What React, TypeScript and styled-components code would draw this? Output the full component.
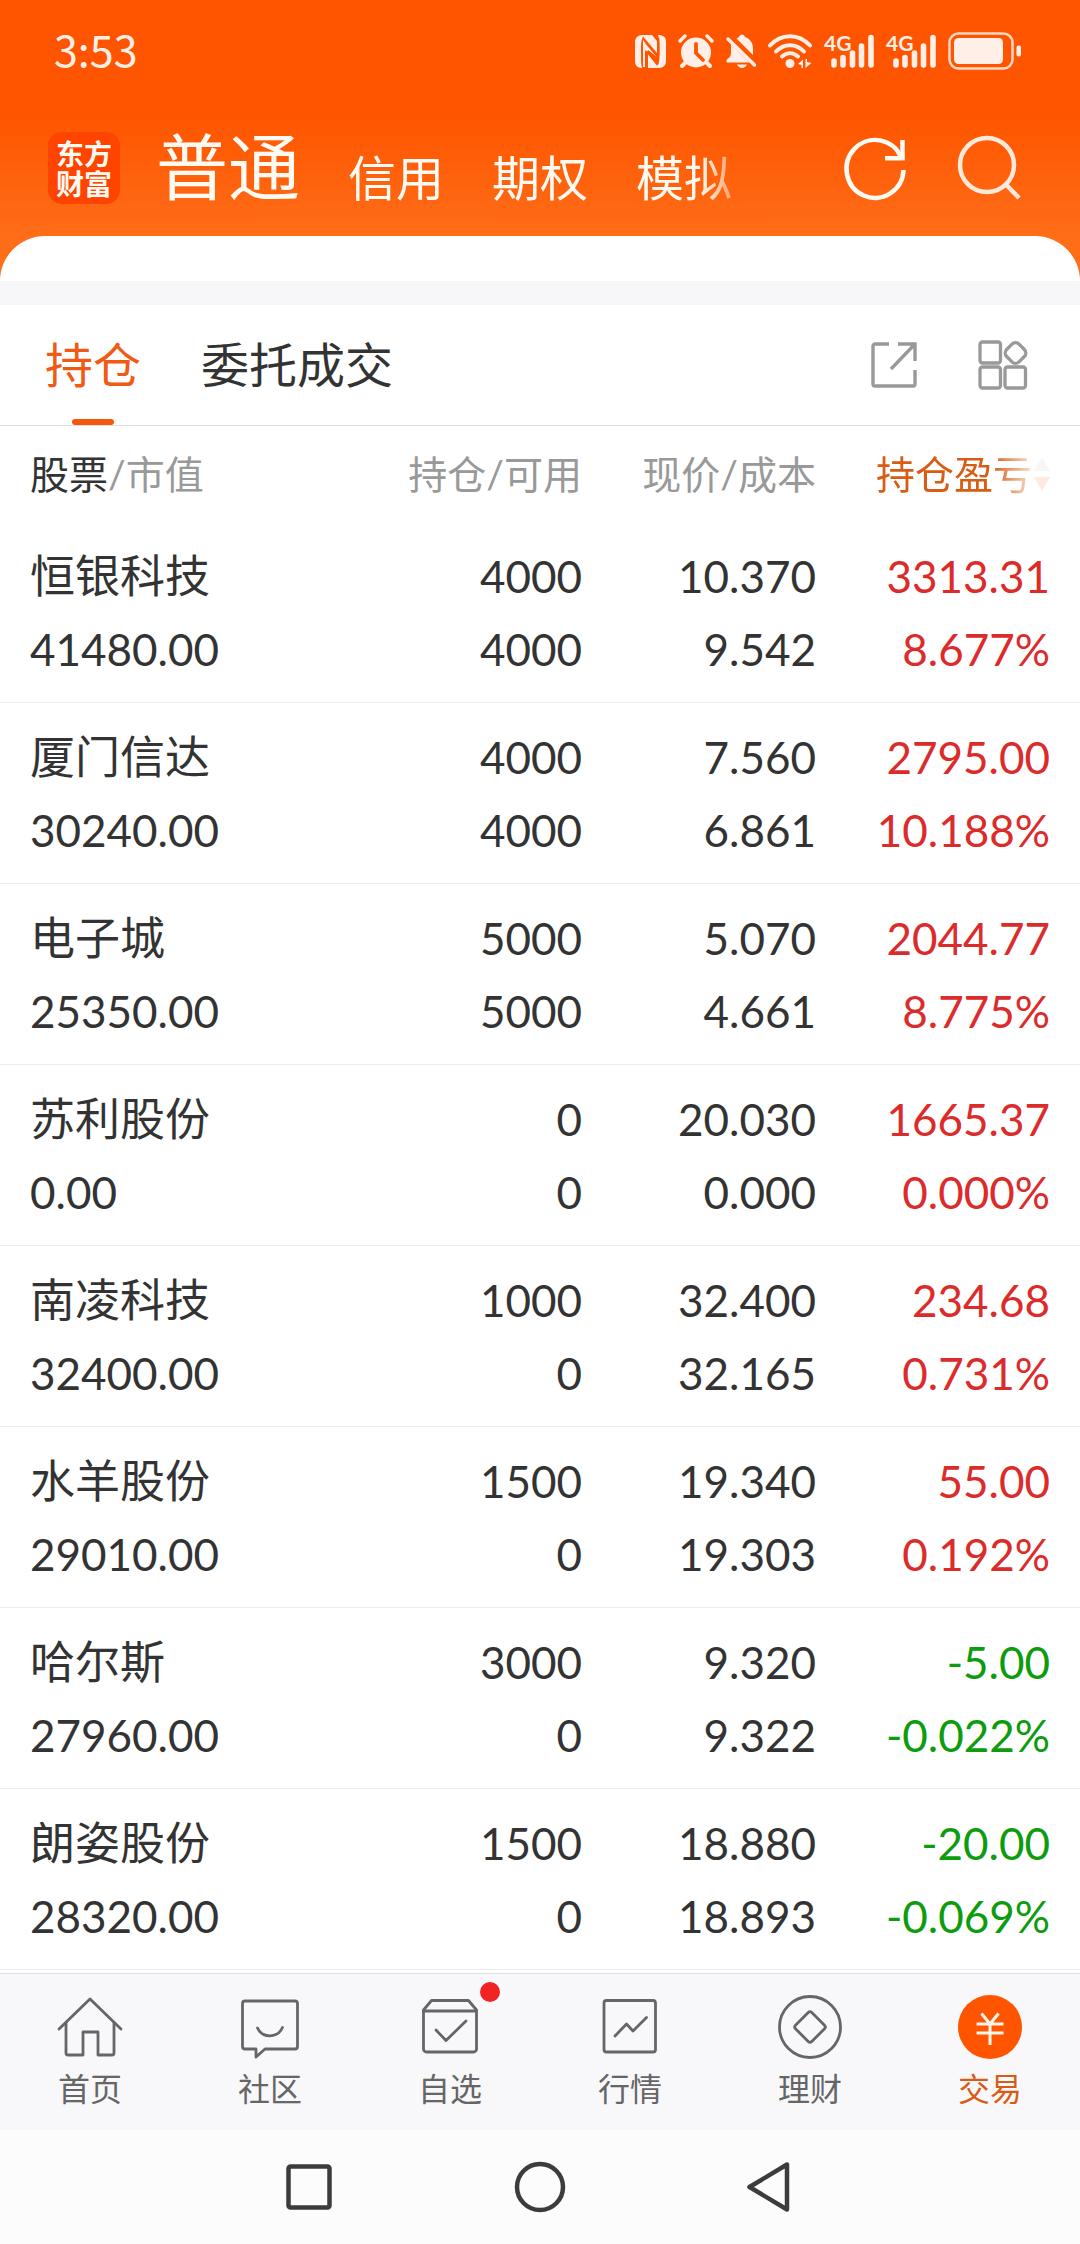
import React from 'react';
import styled, { createGlobalStyle } from 'styled-components';

const GlobalStyle = createGlobalStyle`
  *, *::before, *::after { box-sizing: border-box; }
  body {
    margin: 0;
    background: #fff;
    color: #333;
    font-family: Lato, 'Noto Sans CJK SC', sans-serif;
  }
  button {
    display: block;
    margin: 0;
    padding: 0;
    border: 0;
    background: none;
    color: inherit;
    font: inherit;
    cursor: pointer;
  }
  a { color: inherit; text-decoration: none; }
  svg { display: block; flex: none; overflow: visible; }
`;

const Page = styled.div`
  display: flex;
  flex-direction: column;
  min-height: 100vh;
`;

const Hero = styled.header`
  background: linear-gradient(#ff5500 0, #ff5500 115px, #ff6d18 236px);
`;

const StatusBar = styled.div`
  display: flex;
  align-items: center;
  justify-content: space-between;
  height: 102px;
  padding: 0 59px 0 54px;
  color: #ffefe6;
`;

const Clock = styled.time`
  padding-bottom: 6px;
  font-family: 'Noto Sans CJK SC', sans-serif;
  font-size: 43px;
  line-height: 64px;
`;

const StatusIcons = styled.div`
  display: flex;
  align-items: center;
  gap: 12px;
`;

const TopBar = styled.div`
  display: flex;
  align-items: flex-end;
  height: 134px;
  padding: 0 60px 20px 48px;
  color: #fffaf2;
`;

const Logo = styled.a`
  flex: none;
  width: 72px;
  height: 72px;
  margin: 0 36px 12px 0;
  padding: 6px 8px;
  border-radius: 14px;
  background: #ff4400;
  font-family: 'Noto Sans CJK SC', sans-serif;
  font-weight: 700;
  font-size: 28px;
  line-height: 30px;
`;

const Accounts = styled.nav`
  display: flex;
  flex: 1;
  align-items: flex-end;
  gap: 48px;
  min-width: 0;
  white-space: nowrap;
  font-family: 'Noto Sans CJK SC', sans-serif;
  mask-image: linear-gradient(to left, transparent, #000 56px);
`;

const Account = styled.button<{ $active?: boolean }>`
  flex: none;
  font-size: ${(p) => (p.$active ? 72 : 48)}px;
  line-height: ${(p) => (p.$active ? 106 : 82)}px;
`;

const TopActions = styled.div`
  display: flex;
  gap: 48px;
  margin: 0 0 16px 88px;
`;

const CardTop = styled.div`
  height: 45px;
  border-radius: 46px 46px 0 0;
  background: #fff;
`;

const Band = styled.div`
  height: 24px;
  background: #f7f7fa;
`;

const Main = styled.main`
  flex: 1;
`;

const Sections = styled.div`
  display: flex;
  align-items: center;
  justify-content: space-between;
  height: 121px;
  padding: 0 52px 0 45px;
  border-bottom: 1px solid #dedede;
`;

const SectionTabs = styled.div`
  display: flex;
  gap: 60px;
  height: 100%;
`;

const SectionTab = styled.button<{ $active?: boolean }>`
  position: relative;
  color: ${(p) => (p.$active ? '#f05a14' : '#333')};
  font-size: 48px;
  line-height: 72px;

  &::after {
    content: '';
    display: ${(p) => (p.$active ? 'block' : 'none')};
    position: absolute;
    bottom: 0;
    left: calc(50% - 21px);
    width: 42px;
    height: 6px;
    border-radius: 3px;
    background: #f4570d;
  }
`;

const SectionActions = styled.div`
  display: flex;
  align-items: center;
  gap: 60px;
  color: #999;
`;

const Holdings = styled.table`
  width: 100%;
  border-collapse: separate;
  border-spacing: 0;
  table-layout: fixed;
`;

const Col = styled.col<{ $width?: number }>`
  width: ${(p) => (p.$width ? `${p.$width}px` : 'auto')};
`;

const HeadCell = styled.th<{ $left?: boolean }>`
  height: 96px;
  padding: 0 0 0 ${(p) => (p.$left ? 30 : 0)}px;
  color: #999;
  font-size: 39px;
  font-weight: 400;
  line-height: 60px;
  text-align: ${(p) => (p.$left ? 'left' : 'right')};
  white-space: nowrap;

  &:last-child { padding-right: 30px; }
`;

const Strong = styled.span`
  color: #333;
`;

const SortButton = styled.button`
  display: flex;
  align-items: center;
  gap: 2px;
  margin-left: auto;
  color: #d95c14;
`;

const SortLabel = styled.span`
  mask-image: linear-gradient(to right, #000 74%, rgba(0, 0, 0, 0.2));
`;

const Cell = styled.td<{ $tone?: string }>`
  height: 181px;
  padding: 18px 0 16px;
  border-bottom: 1px solid #ececec;
  color: ${(p) => p.$tone || '#333'};
  font-size: 44px;
  line-height: 73px;
  text-align: right;
  white-space: nowrap;

  &:first-child { padding-left: 30px; text-align: left; }
  &:last-child { padding-right: 30px; }
`;

const Line = styled.div``;

const StockName = styled.div`
  font-size: 45px;
`;

const TabBar = styled.nav`
  display: grid;
  grid-template-columns: repeat(6, 1fr);
  border-top: 1px solid #e0e0e3;
  background: #f8f8fb;
`;

const Tab = styled.a<{ $active?: boolean }>`
  position: relative;
  display: flex;
  flex-direction: column;
  align-items: center;
  gap: 8px;
  padding: 19px 0 21px;
  color: ${(p) => (p.$active ? '#d95c14' : '#666')};
  font-size: 32px;
  line-height: 40px;
`;

const Dot = styled.span`
  position: absolute;
  top: 8px;
  left: calc(50% + 30px);
  width: 20px;
  height: 20px;
  border-radius: 50%;
  background: #f02424;
`;

const SystemBar = styled.div`
  background: #fcfcfc;
  color: #3c3c3c;
`;

const SystemKeys = styled.div`
  display: grid;
  grid-template-columns: repeat(3, 1fr);
  max-width: 690px;
  height: 114px;
  margin: 0 auto;
`;

const SystemKey = styled.button`
  display: flex;
  align-items: center;
  justify-content: center;
`;

/* Status bar icons */

const Nfc = () => (
  <svg width="31" height="33" viewBox="0 0 31 33">
    <path
      d="M7 0h10l5 6v12L8 1.500C6.500 5 6 8 6 12v12c0 4 .5 7 1 9C2 33 0 30 0 26V7C0 3 3 0 7 0z"
      fill="currentColor"
    />
    <path
      d="M8 5l14 17-9-7v18h11c4.500 0 7-3 7-7V7c0-5-2.500-7-8-7 1 3 1.500 7 1.500 12v9c0 4-.5 7-1.500 9L10 15v17H8z"
      fill="currentColor"
    />
    <path d="M11 8l12 14M11.500 16l11 14M23.500 3v17" stroke="#ff5500" strokeWidth="1.800" fill="none" />
  </svg>
);

const Alarm = () => (
  <svg width="36" height="34" viewBox="0 0 36 34" fill="none" stroke="currentColor" strokeLinecap="round">
    <circle cx="18" cy="18.500" r="15" fill="currentColor" stroke="none" />
    <path d="M2 7l5-5M34 7l-5-5" strokeWidth="3.500" />
    <path d="M8 28l-4 4M28 28l4 4" strokeWidth="4" />
    <path d="M18 10v9l7 7" stroke="#ff5500" strokeWidth="3.800" />
  </svg>
);

const Muted = () => (
  <svg width="30" height="34" viewBox="0 0 30 34" fill="currentColor">
    <path d="M10.500 4.500L13 3c1-3.500 5-3.500 6 0 5 2 8 6 8 11v7z" />
    <path d="M5 10l18.500 18.500H2c-2 0-2-2-.5-3.500C4.500 23 5 21 5 18z" />
    <path d="M11 30.500h10c-2 4.500-8 4.500-10 0z" />
    <path d="M2 5l26.500 26" fill="none" stroke="currentColor" strokeWidth="3.500" strokeLinecap="round" />
  </svg>
);

const Wifi = () => (
  <svg width="44" height="34" viewBox="0 0 44 34" fill="none" stroke="currentColor" strokeWidth="4" strokeLinecap="round">
    <path d="M2 11.500C13-1 31-1 42 11.500" />
    <path d="M8 17.500C16 9 28 9 36 17.500" />
    <path d="M14 22.500C19 18 25 18 30 22.500" />
    <circle cx="22" cy="29.500" r="4.500" fill="currentColor" stroke="none" />
    <path d="M30 30l5-4.500V34h-1.500v-3zM43.500 29l-6 5v-9h1.500v3z" fill="currentColor" stroke="none" />
  </svg>
);

const Signal = () => (
  <svg width="50" height="34" viewBox="0 0 50 34">
    <text x="0" y="17" fill="currentColor" fontFamily="Lato, sans-serif" fontWeight="700" fontSize="21">4G</text>
    <path
      d="M10 27v4M19 23.500v7.500M28.500 19v12M37.500 12v19M47 3.500v27.500"
      stroke="currentColor"
      strokeWidth="5.600"
      strokeLinecap="round"
    />
  </svg>
);

const Battery = () => (
  <svg width="73" height="38" viewBox="0 0 73 38">
    <rect x="1.500" y="1.500" width="63" height="35" rx="9" fill="none" stroke="currentColor" strokeWidth="2.500" opacity=".85" />
    <rect x="6" y="6" width="49" height="26" rx="4.500" fill="currentColor" />
    <rect x="68.500" y="13.500" width="4.500" height="11" rx="2" fill="currentColor" />
  </svg>
);

/* Toolbar icons */

const Refresh = () => (
  <svg width="64" height="64" viewBox="0 0 64 64" fill="none" stroke="currentColor" strokeWidth="4.500">
    <path d="M59.500 34A28.500 29 0 1 1 57 21" />
    <path d="M58.500 4v18.200H41" />
  </svg>
);

const Search = () => (
  <svg width="64" height="64" viewBox="0 0 64 64" fill="none" stroke="#ffe9db" strokeWidth="4.500">
    <circle cx="31" cy="29" r="27" />
    <path d="M49 47.500L63 62" />
  </svg>
);

const Share = () => (
  <svg width="48" height="48" viewBox="0 0 48 48" fill="none" stroke="currentColor" strokeWidth="3.400">
    <path d="M19 3H5a2 2 0 0 0-2 2v38a2 2 0 0 0 2 2h38a2 2 0 0 0 2-2V29" />
    <path d="M28 3h17v17M44.500 3.500L21 28" />
  </svg>
);

const Apps = () => (
  <svg width="50" height="50" viewBox="0 0 50 50" fill="none" stroke="currentColor" strokeWidth="3.300">
    <rect x="2" y="2" width="20.500" height="21" rx="2.500" />
    <rect x="2" y="27" width="20.500" height="21" rx="2.500" />
    <rect x="27" y="27" width="20.500" height="21" rx="2.500" />
    <rect x="28.750" y="4.250" width="17.500" height="17.500" rx="5" transform="rotate(45 37.500 13)" />
  </svg>
);

const SortArrows = () => (
  <svg width="16" height="36" viewBox="0 0 16 36">
    <path d="M8 1l8 14H0z" fill="#f6f6f7" />
    <path d="M8 35l8-14H0z" fill="#fdeae1" />
  </svg>
);

/* Bottom tab icons */

const iconProps = {
  width: 68,
  height: 68,
  viewBox: '0 0 68 68',
  fill: 'none',
  stroke: 'currentColor',
  strokeWidth: 2.8,
  strokeLinecap: 'round' as const,
  strokeLinejoin: 'round' as const,
};

const Home = () => (
  <svg {...iconProps}>
    <path d="M3 36L34 6l31 30" />
    <path d="M10 30v30a2 2 0 0 0 2 2h15V39h15v23h14a2 2 0 0 0 2-2V30" />
  </svg>
);

const Community = () => (
  <svg {...iconProps}>
    <path d="M9 8h50a2.500 2.500 0 0 1 2.500 2.500v43A2.500 2.500 0 0 1 59 56H29l-9 8v-8H9a2.500 2.500 0 0 1-2.500-2.500v-43A2.500 2.500 0 0 1 9 8z" />
    <path d="M21.500 35c5 10.500 20 10.500 25-.5" />
  </svg>
);

const Watchlist = () => (
  <svg {...iconProps}>
    <path d="M7.500 17l8-9.500h37l8 9.500v39a3 3 0 0 1-3 3h-47a3 3 0 0 1-3-3z" />
    <path d="M7.500 18h53M20 37l10 10.500L50 28" />
  </svg>
);

const Market = () => (
  <svg {...iconProps}>
    <rect x="8" y="7.500" width="51.500" height="51.500" rx="2.500" />
    <path d="M19 43l11.500-12 6.500 7 13.500-13.500" />
  </svg>
);

const Wealth = () => (
  <svg {...iconProps}>
    <circle cx="34" cy="34" r="30.500" />
    <rect x="22.500" y="22.500" width="23" height="23" rx="2.500" transform="rotate(45 34 34)" />
  </svg>
);

const Trade = () => (
  <svg {...iconProps} stroke="#fff6ec" strokeWidth={3} strokeLinecap="butt">
    <circle cx="34" cy="34" r="32" fill="#ff5500" stroke="none" />
    <path d="M25.500 20.500L34 31l8.500-10.500M34 31v21M20.500 31h27M20.500 40h27" />
  </svg>
);

/* System keys */

const Recents = () => (
  <svg width="52" height="52" viewBox="0 0 52 52" fill="none" stroke="currentColor" strokeWidth="4.500">
    <rect x="4.500" y="5.500" width="41" height="41" rx="2" />
  </svg>
);

const HomeKey = () => (
  <svg width="52" height="52" viewBox="0 0 52 52" fill="none" stroke="currentColor" strokeWidth="4.500">
    <circle cx="26" cy="26" r="23" />
  </svg>
);

const Back = () => (
  <svg width="52" height="52" viewBox="0 0 52 52" fill="none" stroke="currentColor" strokeWidth="4.500" strokeLinejoin="round">
    <path d="M5.500 26L43 3.500v45z" />
  </svg>
);

type Holding = {
  name: string;
  value: string;
  held: string;
  usable: string;
  price: string;
  cost: string;
  profit: string;
  rate: string;
};

const toHolding = ([name, value, held, usable, price, cost, profit, rate]: string[]): Holding => ({
  name, value, held, usable, price, cost, profit, rate,
});

const holdings: Holding[] = [
  ['恒银科技', '41480.00', '4000', '4000', '10.370', '9.542', '3313.31', '8.677%'],
  ['厦门信达', '30240.00', '4000', '4000', '7.560', '6.861', '2795.00', '10.188%'],
  ['电子城', '25350.00', '5000', '5000', '5.070', '4.661', '2044.77', '8.775%'],
  ['苏利股份', '0.00', '0', '0', '20.030', '0.000', '1665.37', '0.000%'],
  ['南凌科技', '32400.00', '1000', '0', '32.400', '32.165', '234.68', '0.731%'],
  ['水羊股份', '29010.00', '1500', '0', '19.340', '19.303', '55.00', '0.192%'],
  ['哈尔斯', '27960.00', '3000', '0', '9.320', '9.322', '-5.00', '-0.022%'],
  ['朗姿股份', '28320.00', '1500', '0', '18.880', '18.893', '-20.00', '-0.069%'],
].map(toHolding);

const tabs = [
  { label: '首页', Icon: Home },
  { label: '社区', Icon: Community },
  { label: '自选', Icon: Watchlist, dot: true },
  { label: '行情', Icon: Market },
  { label: '理财', Icon: Wealth },
  { label: '交易', Icon: Trade, active: true },
];

const toneOf = (profit: string) => (profit.startsWith('-') ? '#0d9c0d' : '#dc2b2b');

export default function App() {
  return (
    <Page>
      <GlobalStyle />
      <Hero>
        <StatusBar>
          <Clock>3:53</Clock>
          <StatusIcons>
            <Nfc />
            <Alarm />
            <Muted />
            <Wifi />
            <Signal />
            <Signal />
            <Battery />
          </StatusIcons>
        </StatusBar>
        <TopBar>
          <Logo href="#">东方财富</Logo>
          <Accounts>
            <Account $active>普通</Account>
            <Account>信用</Account>
            <Account>期权</Account>
            <Account>模拟</Account>
          </Accounts>
          <TopActions>
            <button type="button" aria-label="刷新"><Refresh /></button>
            <button type="button" aria-label="搜索"><Search /></button>
          </TopActions>
        </TopBar>
        <CardTop />
      </Hero>
      <Band />
      <Main>
        <Sections>
          <SectionTabs>
            <SectionTab $active>持仓</SectionTab>
            <SectionTab>委托成交</SectionTab>
          </SectionTabs>
          <SectionActions>
            <button type="button" aria-label="分享"><Share /></button>
            <button type="button" aria-label="更多"><Apps /></button>
          </SectionActions>
        </Sections>
        <Holdings>
          <colgroup>
            <Col />
            <Col $width={234} />
            <Col $width={234} />
            <Col $width={264} />
          </colgroup>
          <thead>
            <tr>
              <HeadCell $left><Strong>股票</Strong>/市值</HeadCell>
              <HeadCell>持仓/可用</HeadCell>
              <HeadCell>现价/成本</HeadCell>
              <HeadCell>
                <SortButton type="button">
                  <SortLabel>持仓盈亏</SortLabel>
                  <SortArrows />
                </SortButton>
              </HeadCell>
            </tr>
          </thead>
          <tbody>
            {holdings.map((h) => (
              <tr key={h.name}>
                <Cell><StockName>{h.name}</StockName><Line>{h.value}</Line></Cell>
                <Cell><Line>{h.held}</Line><Line>{h.usable}</Line></Cell>
                <Cell><Line>{h.price}</Line><Line>{h.cost}</Line></Cell>
                <Cell $tone={toneOf(h.profit)}><Line>{h.profit}</Line><Line>{h.rate}</Line></Cell>
              </tr>
            ))}
          </tbody>
        </Holdings>
      </Main>
      <TabBar>
        {tabs.map(({ label, Icon, dot, active }) => (
          <Tab key={label} href="#" $active={active}>
            <Icon />
            {label}
            {dot && <Dot />}
          </Tab>
        ))}
      </TabBar>
      <SystemBar>
        <SystemKeys>
          <SystemKey type="button" aria-label="最近任务"><Recents /></SystemKey>
          <SystemKey type="button" aria-label="主屏幕"><HomeKey /></SystemKey>
          <SystemKey type="button" aria-label="返回"><Back /></SystemKey>
        </SystemKeys>
      </SystemBar>
    </Page>
  );
}
